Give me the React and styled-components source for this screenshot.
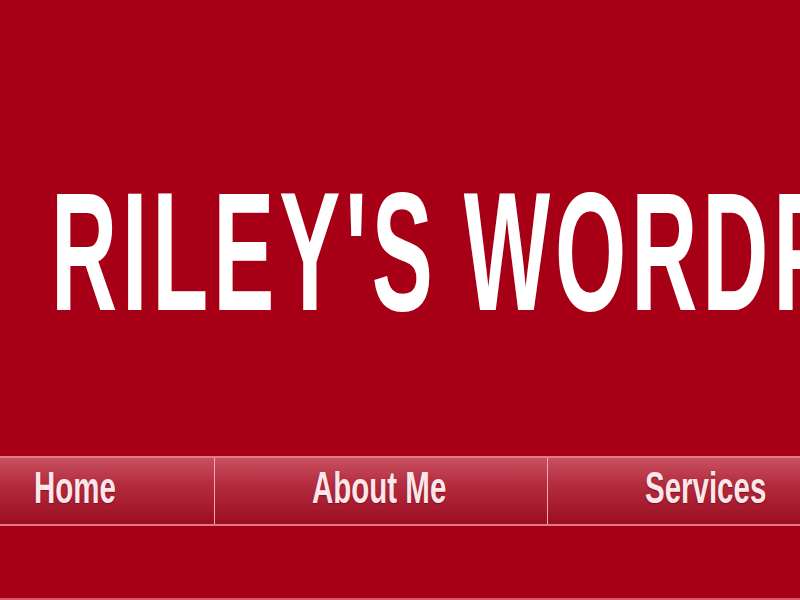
import styled, { createGlobalStyle } from 'styled-components';

const GlobalStyle = createGlobalStyle`
  html, body {
    margin: 0;
    padding: 0;
    background: #a70016;
    overflow: hidden;
  }
`;

const items = [
  { label: 'Home', width: '215px', indent: 34 },
  { label: 'About Me', width: '333px', indent: 97 },
  { label: 'Services', width: '333px', indent: 97 },
];

export default function App() {
  return (
    <Page>
      <GlobalStyle />
      <Masthead>
        <Title>RILEY'S WORDPRESS</Title>
      </Masthead>
      <NavBar>
        {items.map(item => (
          <NavItem key={item.label} $width={item.width} $indent={item.indent}>
            <NavLabel>{item.label}</NavLabel>
          </NavItem>
        ))}
      </NavBar>
      <Content />
    </Page>
  );
}

const Page = styled.div`
  width: 800px;
  height: 600px;
  overflow: hidden;
  background: #a70016;
`;

const Masthead = styled.header`
  height: 456px;
  padding: 168px 0 0 51px;
  box-sizing: border-box;
  white-space: nowrap;
`;

const Title = styled.h1`
  display: inline-block;
  margin: 0;
  font-family: 'Liberation Sans', Arial, sans-serif;
  font-weight: 700;
  font-size: 168px;
  line-height: 1;
  color: #ffffff;
  letter-spacing: 9px;
  word-spacing: -8px;
  transform: scaleX(0.545);
  transform-origin: left top;
`;

const NavBar = styled.nav`
  display: flex;
  height: 70px;
  border-top: 2px solid #e07a88;
  border-bottom: 2px solid #e07a88;
  box-sizing: border-box;
  background: linear-gradient(#c85060, #b42c3e 40%, #9c0e22);
  white-space: nowrap;
`;

const NavItem = styled.a`
  flex: 0 0 ${p => p.$width};
  box-sizing: border-box;
  padding: 0 0 6px ${p => p.$indent}px;
  display: flex;
  align-items: center;
  border-right: 1px solid #f0a8b2;
  text-decoration: none;
`;

const NavLabel = styled.span`
  display: inline-block;
  font-family: 'Liberation Sans', Arial, sans-serif;
  font-weight: 700;
  font-size: 44px;
  line-height: 1;
  color: #fde6ea;
  text-shadow: 0 1px 2px rgba(90, 0, 10, 0.6);
  transform: scaleX(0.67);
  transform-origin: left center;
`;

const Content = styled.main`
  height: 72px;
  border-bottom: 3px solid #d85a6a;
`;
